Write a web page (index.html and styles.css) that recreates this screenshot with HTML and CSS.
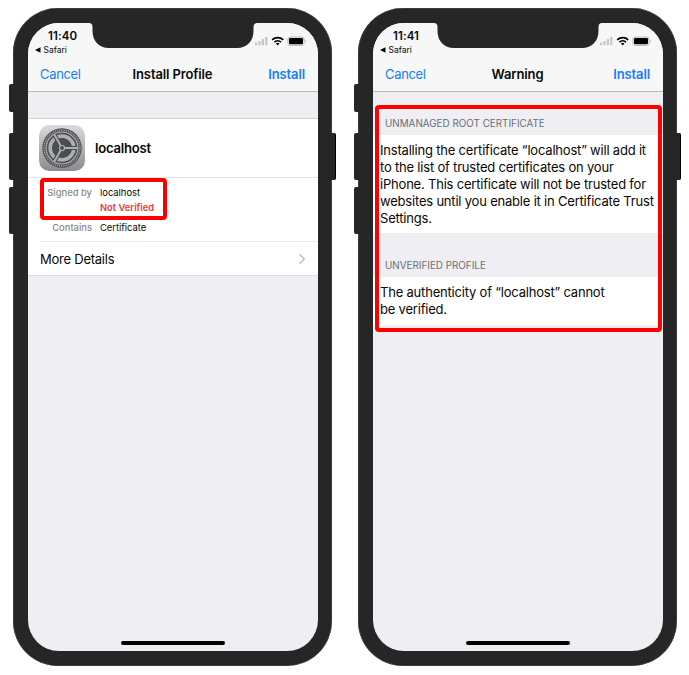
FILE: index.html
```html
<!DOCTYPE html>
<html lang="en">
<head>
<meta charset="utf-8">
<title>Install Profile</title>
<link rel="stylesheet" href="styles.css">
</head>
<body>
<svg class="defs" width="0" height="0" aria-hidden="true">
  <symbol id="status" viewBox="0 0 54 12">
    <g fill="#c5c5c7"><rect x="1" y="7.4" width="2.2" height="2.8" rx=".5"/><rect x="4.4" y="6" width="2.2" height="4.2" rx=".5"/><rect x="7.8" y="4.1" width="2.2" height="6.1" rx=".5"/><rect x="11.2" y="2" width="2.2" height="8.2" rx=".5"/></g>
    <g fill="none" stroke="#000" stroke-width="1.7"><path d="M18.2 4.8a8 8 0 0 1 11 0"/><path d="M20.4 7.2a4.8 4.8 0 0 1 6.6 0"/></g>
    <path d="M21.900 8.500a2.600 2.600 0 0 1 3.600 0l-1.800 2z"/>
    <rect x="33.900" y="2" width="16.200" height="8.400" rx="2.200" fill="none" stroke="#aaa" stroke-width=".8"/>
    <rect x="35" y="3.100" width="14" height="6.200" rx="1.200"/>
    <path d="M51 4.700q1.100 1.500 0 3z" fill="#888"/>
  </symbol>
  <symbol id="notch" viewBox="0 0 168 26">
    <path d="M0 0H168Q164.500 .2 164.500 4V8C164.500 18 158 25 148 25H20C10 25 3.500 18 3.500 8V4Q3.500 .2 0 0Z" fill="#262626"/>
  </symbol>
</svg>
<main class="stage">
  <section class="phone">
    <i class="key mute"></i><i class="key up"></i><i class="key down"></i><i class="key power"></i>
    <div class="screen">
      <svg class="notch"><use href="#notch"/></svg>
      <header class="top">
        <div class="status"><div class="time">11:40</div><svg class="indicators"><use href="#status"/></svg></div>
        <div class="back"><svg width="6" height="6" viewBox="0 0 6 6"><path d="M0 3L5.500 .3V5.700Z"/></svg><span>Safari</span></div>
        <nav class="nav"><span class="cancel">Cancel</span><b class="title">Install Profile</b><span class="install">Install</span></nav>
      </header>
      <div class="profile">
        <div class="app">
          <svg class="gear" viewBox="0 0 46 46">
            <defs><linearGradient id="metal" x2="0" y2="1"><stop stop-color="#dadbdc"/><stop offset="1" stop-color="#898b8e"/></linearGradient></defs>
            <rect width="46" height="46" rx="10.500" fill="url(#metal)"/>
            <circle cx="23" cy="23" r="19.700" fill="#4b4c4e"/>
            <circle cx="23" cy="23" r="18" fill="none" stroke="#a6a7a8" stroke-width="1.500" stroke-dasharray="1 .885"/>
            <circle cx="23" cy="23" r="15.900" fill="none" stroke="#a7a8a9" stroke-width="1.300"/>
            <circle cx="23" cy="23" r="11.800" fill="none" stroke="#adaeb0" stroke-width="3.700"/>
            <g stroke="#4b4c4e" stroke-width="4.200"><path d="M23 23H37.500M23 23L15.750 10.450M23 23L15.750 35.550"/></g>
            <circle cx="23" cy="23" r="9.800" fill="#4b4c4e"/>
            <g stroke="#b0b1b3" stroke-width="1.900"><path d="M25.500 23H38.500M21.750 20.830L15.250 9.580M21.750 25.170L15.250 36.420"/></g>
            <circle cx="23" cy="23" r="2.500" fill="#4b4c4e" stroke="#b0b1b3" stroke-width="1.200"/>
          </svg>
          <b class="name">localhost</b>
        </div>
        <div class="details">
          <div class="key-name">Signed by</div><div class="value">localhost</div>
          <div class="value bad">Not Verified</div>
          <div class="key-name contains">Contains</div><div class="value contains">Certificate</div>
          <div class="mark mark-small"></div>
        </div>
        <div class="more"><span>More Details</span><svg width="8" height="12" viewBox="0 0 8 12"><path d="M1.500 1.200L6.300 6L1.500 10.800" fill="none" stroke="#bdbdc1" stroke-width="1.400"/></svg></div>
      </div>
      <i class="home"></i>
    </div>
  </section>
  <section class="phone">
    <i class="key mute"></i><i class="key up"></i><i class="key down"></i><i class="key power"></i>
    <div class="screen">
      <svg class="notch"><use href="#notch"/></svg>
      <header class="top">
        <div class="status"><div class="time">11:41</div><svg class="indicators"><use href="#status"/></svg></div>
        <div class="back"><svg width="6" height="6" viewBox="0 0 6 6"><path d="M0 3L5.500 .3V5.700Z"/></svg><span>Safari</span></div>
        <nav class="nav"><span class="cancel">Cancel</span><b class="title">Warning</b><span class="install">Install</span></nav>
      </header>
      <div class="warnings">
        <h2 class="label">UNMANAGED ROOT CERTIFICATE</h2>
        <p class="message">Installing the certificate “localhost” will add it<br>to the list of trusted certificates on your<br>iPhone. This certificate will not be trusted for<br>websites until you enable it in Certificate Trust<br>Settings.</p>
        <h2 class="label second">UNVERIFIED PROFILE</h2>
        <p class="message last">The authenticity of “localhost” cannot<br>be verified.</p>
        <div class="mark mark-large"></div>
      </div>
      <i class="home"></i>
    </div>
  </section>
</main>
</body>
</html>
```
FILE: styles.css
```css
* { box-sizing: border-box; }
body { margin: 0; background: #fff; color: #080808; font-family: Inter, "Liberation Sans", sans-serif; font-size: 13px; overflow: hidden; }
.defs { position: absolute; }
.stage { display: flex; gap: 26px; padding: 8px 0 0 13px; height: 675px; }
.phone { position: relative; flex: none; width: 319px; height: 658px; padding: 15px 14.500px; border-radius: 45px; background: #262626; box-shadow: inset 0 0 0 .5px #555; }
.screen { position: relative; width: 290px; height: 628px; overflow: hidden; border-radius: 31px; background: #efeef3; }
.key { position: absolute; width: 5px; left: -4px; border-radius: 2px 0 0 2px; background: #262626; }
.mute { top: 76px; height: 28px; }
.up { top: 125px; height: 47px; }
.down { top: 179px; height: 47px; }
.power { left: 318px; top: 125px; height: 47px; border-radius: 0 2px 2px 0; border-right: 1px solid #000; }
.notch { position: absolute; left: 61px; top: 0; width: 168px; height: 26px; }
.top { height: 69px; background: #f7f7f8; border-bottom: 1px solid #b9b9bc; }
.status { display: flex; justify-content: space-between; height: 21px; padding: 5px 10px 0 20.500px; }
.time { font-size: 11.500px; font-weight: 600; line-height: 16px; letter-spacing: .1px; }
.indicators { width: 54px; height: 12px; margin-top: 7px; }
.back { display: flex; align-items: center; gap: 3px; height: 12px; padding-left: 7px; font-size: 8.500px; }
.nav { display: grid; grid-template-columns: 1fr auto 1fr; align-items: center; height: 35px; padding: 1px 12.500px 0; color: #157efb; font-size: 13px; line-height: 16px; }
.cancel { letter-spacing: -.33px; }
.title { color: #080808; font-weight: 600; letter-spacing: -.12px; }
.install { text-align: right; font-weight: 600; letter-spacing: -.12px; }
.profile { height: 158px; margin-top: 26px; background: #fff; border-top: 1px solid #d3d3d6; border-bottom: 1px solid #dedee0; }
.app { display: flex; align-items: center; height: 59px; padding-left: 11.500px; gap: 10px; border-bottom: 1px solid #e5e5e7; }
.gear { width: 46px; height: 46px; }
.name { font-size: 13.100px; font-weight: 600; letter-spacing: -.22px; }
.details { position: relative; display: grid; grid-template-columns: 52px 1fr; grid-template-rows: 15px 15px 25px; column-gap: 8px; height: 64px; margin-left: 12.500px; padding-top: 7px; border-bottom: 1px solid #ededee; font-size: 9.400px; line-height: 15px; }
.key-name { color: #88888d; text-align: right; font-weight: 500; }
.value { color: #080808; }
.bad { grid-column: 2; color: #eb3b36; font-weight: 600; }
.contains { padding-top: 5px; }
.mark { position: absolute; border: 4px solid #f00; border-radius: 4px; pointer-events: none; }
.mark-small { left: 0; top: 0; width: 127px; height: 42px; }
.more { display: flex; align-items: center; justify-content: space-between; height: 34px; padding: 0 12px 0 12.500px; font-size: 13px; letter-spacing: -.24px; }
.warnings { position: relative; height: 260px; padding-top: 23px; }
.label { height: 20px; margin: 0; padding-left: 12.500px; color: #6d6d72; font-size: 9.800px; font-weight: 400; line-height: 17px; letter-spacing: .03px; }
.message { height: 98px; margin: 0; padding: 6.500px 0 0 7.500px; background: #fff; font-size: 13px; line-height: 17px; letter-spacing: -.2px; white-space: nowrap; }
.second { height: 44px; padding-top: 24px; }
.last { height: 48px; }
.mark-large { left: 2.500px; top: 13px; width: 287px; height: 227px; }
.home { position: absolute; bottom: 6.500px; left: 93px; width: 104px; height: 4px; border-radius: 2px; background: #000; }
```
